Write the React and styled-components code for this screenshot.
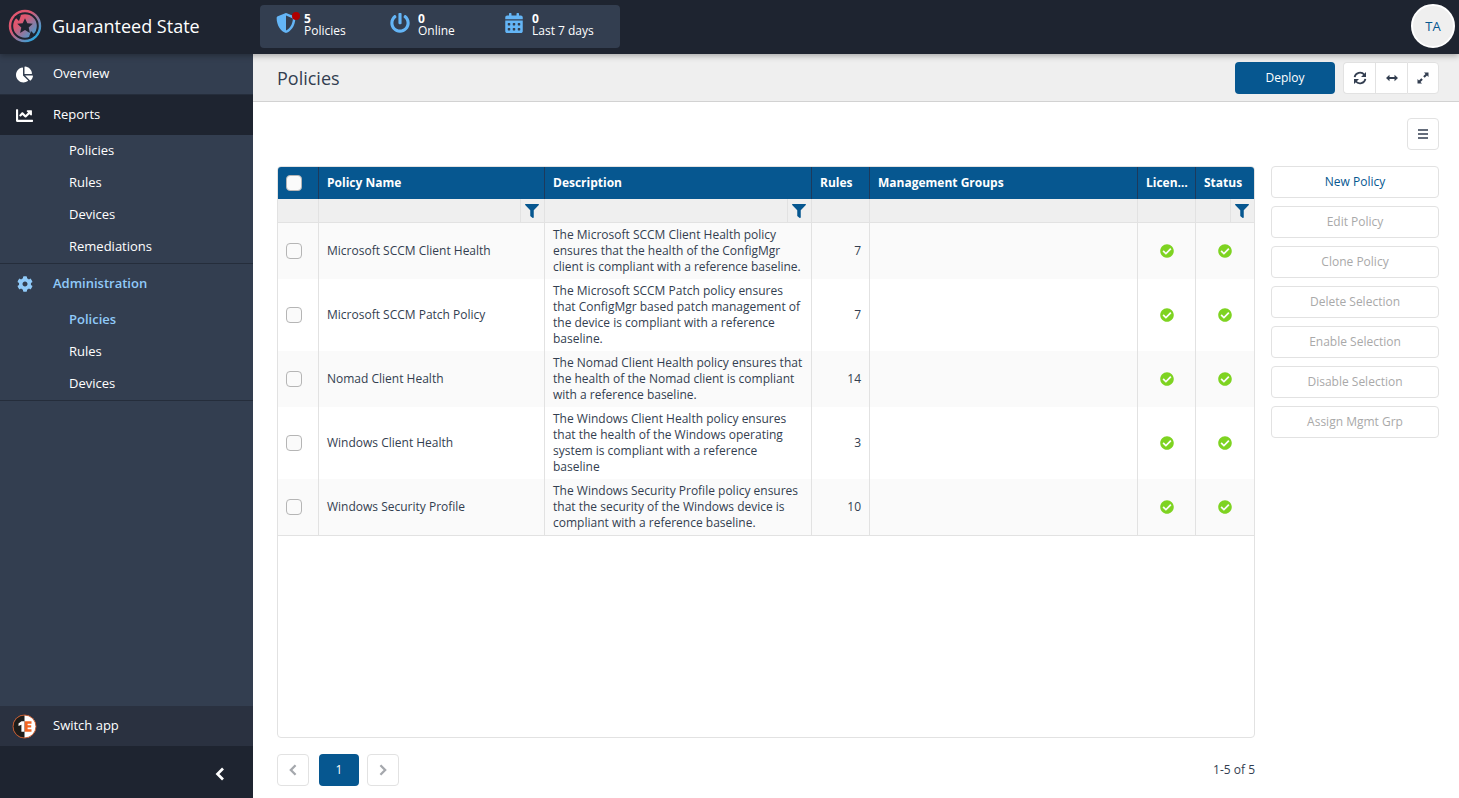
import React, { useState } from 'react';
import styled, { createGlobalStyle } from 'styled-components';
import {
  FaChartPie,
  FaChartLine,
  FaCog,
  FaShieldAlt,
  FaPowerOff,
  FaCalendarAlt,
  FaFilter,
  FaCheckCircle,
} from 'react-icons/fa';

const GlobalStyle = createGlobalStyle`
  * {
    box-sizing: border-box;
  }

  body {
    margin: 0;
    background: #fff;
    color: #333e50;
    font-family: 'Open Sans', 'Noto Sans', sans-serif;
    font-size: 12px;
    line-height: 16px;
  }

  button {
    font-family: inherit;
    font-size: 12px;
    line-height: 16px;
    padding: 0;
    cursor: pointer;
  }
`;

const Page = styled.div`
  display: flex;
  flex-direction: column;
  min-height: 100vh;
`;

const TopBar = styled.header`
  display: flex;
  align-items: flex-start;
  height: 54px;
  padding: 4px 4px 0 8px;
  background: #1e2430;
  color: #fff;
  z-index: 1;
  box-shadow: 0 2px 6px rgba(0, 0, 0, 0.3);
`;

const Brand = styled.a`
  display: flex;
  align-items: center;
  gap: 10px;
  width: 252px;
  height: 44px;
  color: #fff;
  font-size: 18px;
  line-height: 24px;
  text-decoration: none;
`;

const Stats = styled.div`
  display: flex;
  height: 43px;
  margin-top: 1px;
  padding: 0 16px;
  border-radius: 4px;
  background: #333e50;
`;

const Stat = styled.div`
  position: relative;
  display: flex;
  gap: 8px;
  width: ${props => props.$width};
  padding-top: 8px;
  line-height: 12px;

  svg {
    color: #64b5f6;
  }
`;

const StatText = styled.div`
  display: flex;
  flex-direction: column;
`;

const Dot = styled.span`
  position: absolute;
  top: 7px;
  left: 16px;
  width: 8px;
  height: 8px;
  border-radius: 50%;
  background: #b00000;
`;

const Avatar = styled.button`
  width: 44px;
  height: 44px;
  margin-left: auto;
  border: 2px solid #fff;
  border-radius: 50%;
  background: #efefef;
  color: #065790;
  font-size: 13px;
  font-weight: 500;
`;

const Body = styled.div`
  display: flex;
  flex: 1;
`;

const Sidebar = styled.nav`
  display: flex;
  flex-direction: column;
  width: 253px;
  background: #333e50;
`;

const NavGroup = styled.div`
  border-bottom: 1px solid #252d3b;
`;

const NavItem = styled.a`
  display: flex;
  align-items: center;
  gap: 16px;
  height: 40px;
  padding: 0 12px;
  background: ${props => (props.$dark ? props.$dark : 'transparent')};
  color: ${props => (props.$active ? '#90caf9' : '#fff')};
  font-weight: ${props => (props.$active ? 600 : 400)};
  font-size: 13px;
  text-decoration: none;
`;

const NavLabel = styled.span`
  padding-bottom: 2px;
`;

const NavIcon = styled.span`
  display: flex;
  justify-content: center;
  width: 25px;
`;

const SubItem = styled.a`
  display: block;
  padding: 7px 0 9px 69px;
  color: ${props => (props.$active ? '#90caf9' : '#fff')};
  font-weight: ${props => (props.$active ? 600 : 400)};
  font-size: 13px;
  text-decoration: none;
`;

const SidebarFoot = styled.div`
  margin-top: auto;
`;

const Collapse = styled.button`
  display: flex;
  align-items: center;
  justify-content: flex-end;
  width: 100%;
  height: 52px;
  padding: 4px 26px 0;
  border: 0;
  background: #1e2430;
  color: #fff;
`;

const Main = styled.main`
  display: flex;
  flex-direction: column;
  flex: 1;
  min-width: 0;
`;

const TitleBar = styled.div`
  display: flex;
  align-items: center;
  height: 48px;
  padding: 0 20px 0 24px;
  border-bottom: 1px solid #d2d2d2;
  background: #efefef;
`;

const Title = styled.h1`
  flex: 1;
  margin: 0;
  font-size: 18px;
  font-weight: 500;
  line-height: 24px;
`;

const DeployButton = styled.button`
  width: 100px;
  height: 32px;
  margin-right: 8px;
  border: 0;
  border-radius: 4px;
  background: #065790;
  color: #fff;
`;

const IconButton = styled.button`
  display: flex;
  align-items: center;
  justify-content: center;
  width: 32px;
  height: 32px;
  border: 1px solid #e2e2e2;
  border-radius: 4px;
  background: #fff;
  color: #333e50;

  &:disabled {
    color: #a5a8ad;
    cursor: default;
  }
`;

const ButtonGroup = styled.div`
  display: flex;

  ${IconButton}:not(:first-child) {
    border-top-left-radius: 0;
    border-bottom-left-radius: 0;
  }

  ${IconButton}:not(:last-child) {
    border-right: 0;
    border-top-right-radius: 0;
    border-bottom-right-radius: 0;
  }
`;

const Content = styled.div`
  display: flex;
  flex-direction: column;
  flex: 1;
  gap: 16px;
  padding: 16px 20px 12px 24px;
`;

const Tools = styled.div`
  display: flex;
  justify-content: flex-end;
`;

const Columns = styled.div`
  display: flex;
  flex: 1;
  gap: 16px;
`;

const TableBox = styled.div`
  flex: 1;
  min-width: 0;
  border: 1px solid #e2e2e2;
  border-radius: 4px;
  overflow: hidden;
`;

const Table = styled.table`
  width: 100%;
  table-layout: fixed;
  border-collapse: separate;
  border-spacing: 0;
`;

const HeadCell = styled.th`
  width: ${props => props.$width};
  height: 32px;
  padding: 0 4px 0 8px;
  border-right: 1px solid #1d3a5c;
  background: #065790;
  color: #fff;
  font-weight: 700;
  text-align: left;
  white-space: nowrap;
  overflow: hidden;
  text-overflow: ellipsis;

  &:last-child {
    border-right: 0;
  }
`;

const FilterCell = styled.td`
  height: 24px;
  padding: 0;
  border-right: 1px solid #e2e2e2;
  border-bottom: 1px solid #e2e2e2;
  background: #efefef;

  &:last-child {
    border-right: 0;
  }
`;

const FilterButton = styled.button`
  display: flex;
  align-items: center;
  justify-content: flex-start;
  width: 24px;
  height: 23px;
  margin-left: auto;
  padding-left: 4px;
  border: 0;
  border-left: 1px solid #e2e2e2;
  background: transparent;
  color: #065790;
`;

const Row = styled.tr`
  background: #fff;

  &:nth-child(odd) {
    background: #fafafa;
  }

  &:last-child td {
    border-bottom: 1px solid #e2e2e2;
  }
`;

const Cell = styled.td`
  padding: 4px 8px;
  border-right: 1px solid #e2e2e2;
  text-align: ${props => props.$align || 'left'};
  vertical-align: middle;

  svg {
    display: block;
    margin: 0 auto;
    color: #7ed321;
  }

  &:last-child {
    border-right: 0;
  }
`;

const Checkbox = styled.input`
  display: block;
  appearance: none;
  width: 16px;
  height: 16px;
  margin: 0;
  border: 1px solid #b5b5b5;
  border-radius: 4px;
  background: #fafafa;

  &:checked {
    background: #64b5f6;
  }
`;

const Actions = styled.div`
  display: flex;
  flex-direction: column;
  gap: 8px;
  width: 168px;
`;

const ActionButton = styled.button`
  height: 32px;
  border: 1px solid #e2e2e2;
  border-radius: 4px;
  background: #fff;
  color: #065790;

  &:disabled {
    color: #a9a9a9;
    cursor: default;
  }
`;

const Pager = styled.div`
  display: flex;
  align-items: center;
  gap: 8px;
  padding-right: 184px;
`;

const PageButton = styled.button`
  width: 40px;
  height: 32px;
  margin-left: 2px;
  border: 0;
  border-radius: 4px;
  background: #065790;
  color: #fff;
`;

const PageInfo = styled.span`
  margin-left: auto;
`;

const policies = [
  {
    name: 'Microsoft SCCM Client Health',
    description:
      'The Microsoft SCCM Client Health policy ensures that the health of the ConfigMgr client is compliant with a reference baseline.',
    rules: 7,
  },
  {
    name: 'Microsoft SCCM Patch Policy',
    description:
      'The Microsoft SCCM Patch policy ensures that ConfigMgr based patch management of the device is compliant with a reference baseline.',
    rules: 7,
  },
  {
    name: 'Nomad Client Health',
    description:
      'The Nomad Client Health policy ensures that the health of the Nomad client is compliant with a reference baseline.',
    rules: 14,
  },
  {
    name: 'Windows Client Health',
    description:
      'The Windows Client Health policy ensures that the health of the Windows operating system is compliant with a reference baseline',
    rules: 3,
  },
  {
    name: 'Windows Security Profile',
    description:
      'The Windows Security Profile policy ensures that the security of the Windows device is compliant with a reference baseline.',
    rules: 10,
  },
];

const columns = [
  { title: 'Policy Name', width: '226px', filter: true },
  { title: 'Description', width: '267px', filter: true },
  { title: 'Rules', width: '58px' },
  { title: 'Management Groups', width: 'auto' },
  { title: 'Licensed', width: '58px' },
  { title: 'Status', width: '58px', filter: true },
];

const actions = [
  'Edit Policy',
  'Clone Policy',
  'Delete Selection',
  'Enable Selection',
  'Disable Selection',
  'Assign Mgmt Grp',
];

const Logo = () => (
  <svg width="34" height="34" viewBox="0 0 34 34" fill="none">
    <defs>
      <linearGradient id="brand" x1="6" y1="6" x2="28" y2="28" gradientUnits="userSpaceOnUse">
        <stop offset="0.3" stopColor="#e0566f" />
        <stop offset="1" stopColor="#2fa4dc" />
      </linearGradient>
    </defs>
    <circle cx="17" cy="17" r="15" stroke="url(#brand)" strokeWidth="2.4" />
    <circle cx="17" cy="17" r="11.800" fill="url(#brand)" />
    <path d="M17 9.200l2.300 5 5.500.6-4.100 3.700 1.200 5.400-4.900-2.800-4.900 2.800 1.200-5.400-4.100-3.700 5.500-.6z" fill="#1e2430" />
    <path d="M6.500 7.500l6.500-1.500-2 6zM27.500 26.500l-6.500 1.500 2-6z" fill="#1e2430" />
  </svg>
);

const SwitchLogo = () => (
  <svg width="25" height="25" viewBox="0 0 25 25">
    <circle cx="12.500" cy="12.500" r="11.500" fill="#fff" />
    <path d="M12.500 1a11.500 11.500 0 0 0 0 23z" fill="#1d1d1b" />
    <circle cx="12.500" cy="12.500" r="11.500" fill="none" stroke="#c4562a" />
    <path d="M6.500 9.500l3-2.200h2.700v10.400H9.400v-7l-2.900 1.200z" fill="#fff" />
    <path d="M12.800 7.300h6.700v2.400h-3.900v1.600h3.600v2.300h-3.600v1.700h3.900v2.400h-6.700z" fill="#f26522" />
  </svg>
);

const Chevron = ({ size, right }) => (
  <svg width={size} height={size} viewBox="0 0 14 14" fill="none" stroke="currentColor" strokeWidth="2.700">
    <path d={right ? 'M4 1.500L9.500 7 4 12.500' : 'M10 1.500L4.500 7l5.500 5.500'} />
  </svg>
);

const RefreshIcon = () => (
  <svg width="14" height="14" viewBox="0 0 14 14" fill="none" stroke="currentColor" strokeWidth="1.800">
    <path d="M1.600 6.200A5.500 5.500 0 0 1 11.300 3.700M12.400 7.800A5.500 5.500 0 0 1 2.700 10.300" />
    <path d="M13 1v5H8zM1 13V8h5z" fill="currentColor" stroke="none" />
  </svg>
);

const WidthIcon = () => (
  <svg width="14" height="14" viewBox="0 0 14 14" fill="currentColor">
    <path d="M1 7l3.500-3.200v2.300h5V3.800L13 7l-3.500 3.200V7.900h-5v2.300z" />
  </svg>
);

const ExpandIcon = () => (
  <svg width="14" height="14" viewBox="0 0 14 14" fill="currentColor">
    <path d="M8 1.500h4.500V6L11 4.500 8.700 6.800 7.200 5.300 9.500 3zM6 12.500H1.500V8L3 9.500l2.300-2.300 1.500 1.500L4.500 11z" />
  </svg>
);

const MenuIcon = () => (
  <svg width="12" height="12" viewBox="0 0 12 12" stroke="currentColor" strokeWidth="1.700">
    <path d="M1 2h10M1 6h10M1 10h10" />
  </svg>
);

const Header = () => (
  <TopBar>
    <Brand href="#">
      <Logo />
      Guaranteed State
    </Brand>
    <Stats>
      <Stat $width="114px">
        <FaShieldAlt size={20} />
        <Dot />
        <StatText>
          <strong>5</strong>
          <span>Policies</span>
        </StatText>
      </Stat>
      <Stat $width="114px">
        <FaPowerOff size={20} />
        <StatText>
          <strong>0</strong>
          <span>Online</span>
        </StatText>
      </Stat>
      <Stat $width="100px">
        <FaCalendarAlt size={20} />
        <StatText>
          <strong>0</strong>
          <span>Last 7 days</span>
        </StatText>
      </Stat>
    </Stats>
    <Avatar>TA</Avatar>
  </TopBar>
);

const Navigation = () => (
  <Sidebar>
    <NavGroup>
      <NavItem href="#">
        <NavIcon><FaChartPie size={17} /></NavIcon>
        <NavLabel>Overview</NavLabel>
      </NavItem>
    </NavGroup>
    <NavGroup>
      <NavItem href="#" $dark="#1e2430">
        <NavIcon><FaChartLine size={17} /></NavIcon>
        <NavLabel>Reports</NavLabel>
      </NavItem>
      <SubItem href="#">Policies</SubItem>
      <SubItem href="#">Rules</SubItem>
      <SubItem href="#">Devices</SubItem>
      <SubItem href="#">Remediations</SubItem>
    </NavGroup>
    <NavGroup>
      <NavItem href="#" $active>
        <NavIcon><FaCog size={16} /></NavIcon>
        <NavLabel>Administration</NavLabel>
      </NavItem>
      <SubItem href="#" $active>Policies</SubItem>
      <SubItem href="#">Rules</SubItem>
      <SubItem href="#">Devices</SubItem>
    </NavGroup>
    <SidebarFoot>
      <NavItem href="#" $dark="#2a3140">
        <NavIcon><SwitchLogo /></NavIcon>
        <NavLabel>Switch app</NavLabel>
      </NavItem>
      <Collapse aria-label="Collapse menu">
        <Chevron size={14} />
      </Collapse>
    </SidebarFoot>
  </Sidebar>
);

const PolicyTable = () => {
  const [selected, setSelected] = useState([]);
  const allSelected = selected.length === policies.length;

  const toggle = name => {
    setSelected(
      selected.includes(name) ? selected.filter(item => item !== name) : [...selected, name]
    );
  };

  return (
    <TableBox>
      <Table>
        <thead>
          <tr>
            <HeadCell $width="41px">
              <Checkbox
                type="checkbox"
                aria-label="Select all"
                checked={allSelected}
                onChange={() => setSelected(allSelected ? [] : policies.map(policy => policy.name))}
              />
            </HeadCell>
            {columns.map(column => (
              <HeadCell key={column.title} $width={column.width}>{column.title}</HeadCell>
            ))}
          </tr>
          <tr>
            <FilterCell />
            {columns.map(column => (
              <FilterCell key={column.title}>
                {column.filter && (
                  <FilterButton aria-label={`Filter ${column.title}`}>
                    <FaFilter size={14} />
                  </FilterButton>
                )}
              </FilterCell>
            ))}
          </tr>
        </thead>
        <tbody>
          {policies.map(policy => (
            <Row key={policy.name}>
              <Cell>
                <Checkbox
                  type="checkbox"
                  aria-label={policy.name}
                  checked={selected.includes(policy.name)}
                  onChange={() => toggle(policy.name)}
                />
              </Cell>
              <Cell>{policy.name}</Cell>
              <Cell>{policy.description}</Cell>
              <Cell $align="right">{policy.rules}</Cell>
              <Cell />
              <Cell><FaCheckCircle size={14} /></Cell>
              <Cell><FaCheckCircle size={14} /></Cell>
            </Row>
          ))}
        </tbody>
      </Table>
    </TableBox>
  );
};

const App = () => (
  <Page>
    <GlobalStyle />
    <Header />
    <Body>
      <Navigation />
      <Main>
        <TitleBar>
          <Title>Policies</Title>
          <DeployButton>Deploy</DeployButton>
          <ButtonGroup>
            <IconButton aria-label="Refresh"><RefreshIcon /></IconButton>
            <IconButton aria-label="Fit width"><WidthIcon /></IconButton>
            <IconButton aria-label="Full screen"><ExpandIcon /></IconButton>
          </ButtonGroup>
        </TitleBar>
        <Content>
          <Tools>
            <IconButton aria-label="Table options"><MenuIcon /></IconButton>
          </Tools>
          <Columns>
            <PolicyTable />
            <Actions>
              <ActionButton>New Policy</ActionButton>
              {actions.map(action => (
                <ActionButton key={action} disabled>{action}</ActionButton>
              ))}
            </Actions>
          </Columns>
          <Pager>
            <IconButton aria-label="Previous page" disabled><Chevron size={12} /></IconButton>
            <PageButton>1</PageButton>
            <IconButton aria-label="Next page" disabled><Chevron size={12} right /></IconButton>
            <PageInfo>1-5 of 5</PageInfo>
          </Pager>
        </Content>
      </Main>
    </Body>
  </Page>
);

export default App;
